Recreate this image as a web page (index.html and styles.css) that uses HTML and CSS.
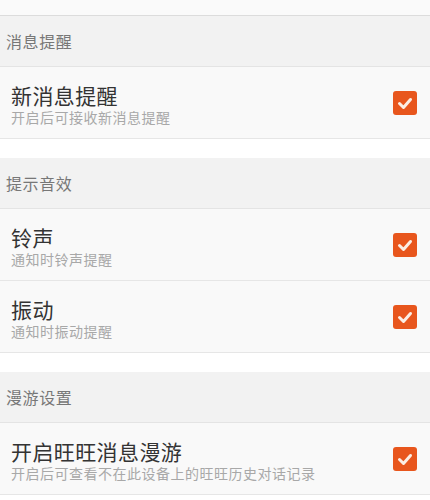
FILE: index.html
```html
<!DOCTYPE html>
<html lang="zh-CN">
<head>
    <meta charset="UTF-8">
    <meta name="viewport" content="width=device-width, initial-scale=1.0">
    <title>消息设置</title>
    <link rel="stylesheet" href="styles.css">
</head>
<body>
    <div class="top-strip"></div>

    <div class="section-title">消息提醒</div>
    <div class="setting-row">
        <div class="setting-text">
            <div class="setting-name">新消息提醒</div>
            <div class="setting-desc">开启后可接收新消息提醒</div>
        </div>
        <span class="check"><svg viewBox="0 0 24 24"><path d="M6.5 12.5l4 4 7-8"/></svg></span>
    </div>

    <div class="gap"></div>

    <div class="section-title">提示音效</div>
    <div class="setting-row">
        <div class="setting-text">
            <div class="setting-name">铃声</div>
            <div class="setting-desc">通知时铃声提醒</div>
        </div>
        <span class="check"><svg viewBox="0 0 24 24"><path d="M6.5 12.5l4 4 7-8"/></svg></span>
    </div>
    <div class="setting-row">
        <div class="setting-text">
            <div class="setting-name">振动</div>
            <div class="setting-desc">通知时振动提醒</div>
        </div>
        <span class="check"><svg viewBox="0 0 24 24"><path d="M6.5 12.5l4 4 7-8"/></svg></span>
    </div>

    <div class="gap"></div>

    <div class="section-title">漫游设置</div>
    <div class="setting-row">
        <div class="setting-text">
            <div class="setting-name">开启旺旺消息漫游</div>
            <div class="setting-desc">开启后可查看不在此设备上的旺旺历史对话记录</div>
        </div>
        <span class="check"><svg viewBox="0 0 24 24"><path d="M6.5 12.5l4 4 7-8"/></svg></span>
    </div>
</body>
</html>
```

FILE: styles.css
```css
body {
    margin: 0;
    background: #fff;
    font-family: "Noto Sans CJK SC", "Noto Sans", sans-serif;
}

.top-strip {
    height: 15px;
    background: #fafafa;
    border-bottom: 1px solid #dcdcdc;
}

.section-title {
    height: 50px;
    line-height: 50px;
    padding-left: 6px;
    background: #f2f2f2;
    border-bottom: 1px solid #e4e4e4;
    font-size: 16px;
    letter-spacing: 0.6px;
    color: #777;
}

.setting-row {
    display: flex;
    align-items: center;
    height: 71px;
    padding: 0 13px 0 11px;
    background: #f9f9f9;
    border-bottom: 1px solid #e6e6e6;
}

.setting-text {
    flex: 1;
    padding-top: 2px;
}

.setting-name {
    font-size: 21px;
    line-height: 26px;
    color: #333;
    letter-spacing: 0.4px;
}

.setting-desc {
    font-size: 14px;
    line-height: 18px;
    color: #a8a8a8;
    letter-spacing: 0.5px;
    white-space: nowrap;
}

.check {
    width: 24px;
    height: 24px;
    border-radius: 3px;
    background: #e8561d;
    flex-shrink: 0;
}

.check svg {
    display: block;
    width: 24px;
    height: 24px;
    fill: none;
    stroke: #fbeee4;
    stroke-width: 3;
    stroke-linecap: round;
    stroke-linejoin: round;
}

.gap {
    height: 19px;
}
```
